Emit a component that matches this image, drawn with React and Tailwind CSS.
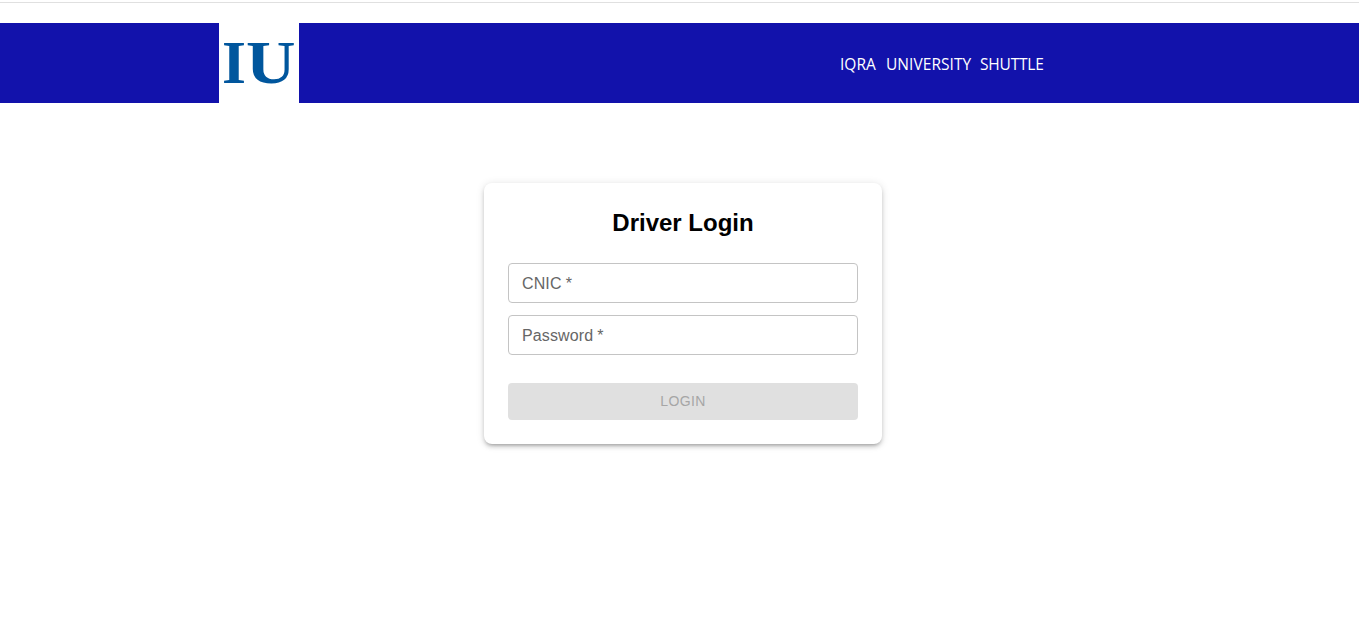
function Logo() {
  return (
    <svg width="80" height="80" viewBox="0 0 80 80" className="block bg-white" role="img" aria-label="IU">
      <g fill="#00569d" fontFamily="'Liberation Serif', serif" fontWeight="700" fontSize="62">
        <text x="3" y="59.5" textLength="24" lengthAdjust="spacingAndGlyphs">I</text>
        <text x="27" y="59.5" textLength="49.5" lengthAdjust="spacingAndGlyphs">U</text>
      </g>
    </svg>
  );
}

function Field({ label }) {
  return (
    <div className="flex h-10 items-center rounded border border-[#c4c4c4] px-[13px] text-base leading-[23px] tracking-[0.13px] text-[#666666]">
      {label}
      <span className="pl-1">*</span>
    </div>
  );
}

export default function App() {
  return (
    <div className="flex h-[632px] flex-col overflow-hidden bg-white font-['Liberation_Sans',sans-serif]">
      <div className="h-[23px] pt-[2px]">
        <div className="h-px bg-[#e0e0e0]" />
      </div>
      <header className="flex h-20 items-center justify-between bg-[#1212ab] pr-[315px] pl-[219px]">
        <Logo />
        <nav className="flex gap-[9px] pt-[2px] font-['Open_Sans',sans-serif] text-[15.5px] leading-6 text-white">
          <span className="w-9">IQRA</span>
          <span className="w-[86px] pl-px tracking-[0.05px]">UNIVERSITY</span>
          <span className="w-16 tracking-[-0.2px]">SHUTTLE</span>
        </nav>
      </header>
      <main className="flex justify-center pt-20 pl-[7px]">
        <form className="flex h-[261px] w-[398px] flex-col rounded-lg bg-white px-6 pt-6 shadow-[0px_3px_3px_-2px_rgba(0,0,0,0.2),0px_3px_4px_0px_rgba(0,0,0,0.14),0px_1px_8px_0px_rgba(0,0,0,0.12)]">
          <h1 className="mb-6 text-center text-2xl leading-8 font-bold text-black">Driver Login</h1>
          <div className="flex flex-col gap-3">
            <Field label="CNIC" />
            <Field label="Password" />
          </div>
          <button type="button" disabled className="mt-7 h-[37px] rounded bg-[#e0e0e0] pb-[2px] text-sm tracking-[0.4px] text-[#a6a6a6]">
            LOGIN
          </button>
        </form>
      </main>
    </div>
  );
}
